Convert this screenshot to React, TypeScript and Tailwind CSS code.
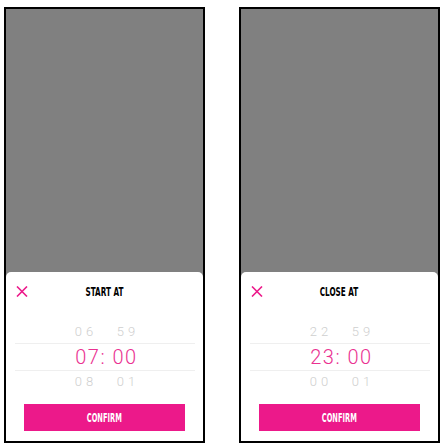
import React from 'react';

interface PickerProps {
  title: string;
  prev: [string, string];
  current: [string, string];
  next: [string, string];
}

const cond = { fontFamily: '"DejaVu Sans Condensed", "DejaVu Sans", sans-serif' };
const digits = { fontFamily: 'Roboto, "Open Sans", sans-serif' };

function SideRow({ values }: { values: [string, string] }) {
  return (
    <div className="h-[22px] flex items-center justify-center text-[13px] font-light text-[#cfcfcf]" style={digits}>
      <span className="w-[36px] text-center tracking-[4px] pl-[4px]">{values[0]}</span>
      <span className="w-[6px]" />
      <span className="w-[36px] text-center tracking-[4px] pl-[4px]">{values[1]}</span>
    </div>
  );
}

function TimeSheet({ title, prev, current, next }: PickerProps) {
  return (
    <div className="w-[201px] h-[436px] border-2 border-black bg-[#808080] flex flex-col justify-end">
      <div className="h-[169px] bg-white rounded-t-[5px] flex flex-col">
        <div className="relative h-[40px] flex items-center justify-center">
          <svg
            className="absolute left-[10px] top-[14px]"
            width="12"
            height="11"
            viewBox="0 0 12 11"
            fill="none"
            stroke="#ec198a"
            strokeWidth="1.6"
          >
            <path d="M1 0.5 L11 10.5 M11 0.5 L1 10.5" />
          </svg>
          <span className="text-[13px] font-bold text-black scale-x-[0.62] whitespace-nowrap" style={cond}>
            {title}
          </span>
        </div>

        <div className="mt-[9px] ml-[9px] mr-[8px]">
          <SideRow values={prev} />
          <div
            className="h-[28px] border-y border-[#efefef] flex items-center justify-center pl-[3px] text-[20px] font-light tracking-[1.5px] text-[#ea3191] whitespace-pre"
            style={digits}
          >
            {`${current[0]}: ${current[1]}`}
          </div>
          <SideRow values={next} />
        </div>

        <button className="mt-[11px] mx-[18px] h-[27px] bg-[#ec198a] flex items-center justify-center">
          <span className="text-[12px] font-bold text-white scale-x-[0.62] whitespace-nowrap" style={cond}>
            CONFIRM
          </span>
        </button>
      </div>
    </div>
  );
}

export default function App() {
  return (
    <div className="bg-white w-[445px] h-[448px] pl-[4px] pt-[7px] flex gap-[34px]">
      <TimeSheet title="START AT" prev={['06', '59']} current={['07', '00']} next={['08', '01']} />
      <TimeSheet title="CLOSE AT" prev={['22', '59']} current={['23', '00']} next={['00', '01']} />
    </div>
  );
}
